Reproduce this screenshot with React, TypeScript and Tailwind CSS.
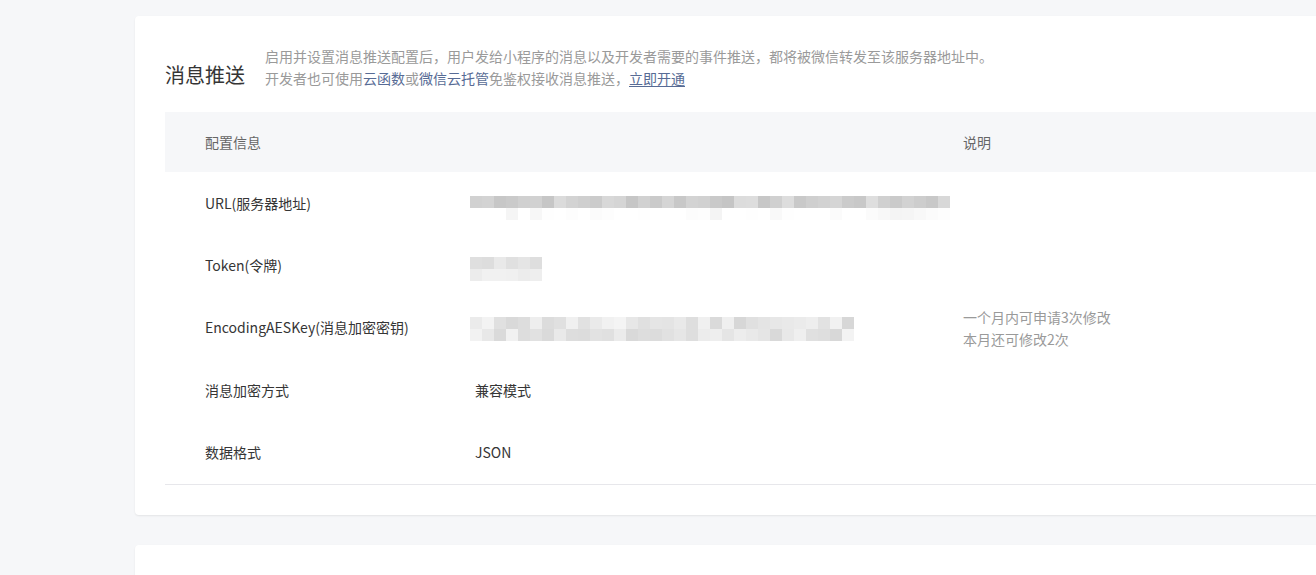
import React from "react";

// deterministic pseudo random so the mosaic looks the same every render
function seeded(seed: number) {
  let s = seed;
  return () => {
    s = (s * 9301 + 49297) % 233280;
    return s / 233280;
  };
}

function gray(v: number) {
  const h = Math.min(255, Math.round(v)).toString(16).padStart(2, "0");
  return `#${h}${h}${h}`;
}

type MosaicProps = {
  blocks: number;
  seed: number;
  top: [number, number];
  bottom: [number, number];
  bottomBias?: number;
  className?: string;
};

function Mosaic({ blocks, seed, top, bottom, bottomBias = 1, className }: MosaicProps) {
  const rnd = seeded(seed);
  const topRow = Array.from({ length: blocks }, () => gray(top[0] + (top[1] - top[0]) * rnd()));
  // bias pushes the lower row towards its light end
  const bottomRow = Array.from({ length: blocks }, () =>
    gray(bottom[1] - (bottom[1] - bottom[0]) * Math.pow(rnd(), bottomBias))
  );
  return (
    <div className={`flex flex-col ml-[-5px] ${className ?? ""}`}>
      {[topRow, bottomRow].map((row, r) => (
        <div key={r} className="flex">
          {row.map((c, i) => (
            <div key={i} className="w-[12px] h-[12px]" style={{ backgroundColor: c }} />
          ))}
        </div>
      ))}
    </div>
  );
}

const rows: { label: string; value: React.ReactNode; note?: React.ReactNode }[] = [
  {
    label: "URL(服务器地址)",
    value: (
      <Mosaic blocks={40} seed={7} top={[196, 222]} bottom={[242, 255]} bottomBias={4} className="mt-[10px]" />
    ),
  },
  {
    label: "Token(令牌)",
    value: <Mosaic blocks={6} seed={3} top={[218, 234]} bottom={[236, 244]} className="mt-[6px]" />,
  },
  {
    label: "EncodingAESKey(消息加密密钥)",
    value: <Mosaic blocks={32} seed={11} top={[214, 246]} bottom={[214, 244]} className="mt-[2px]" />,
    note: (
      <div className="leading-[22px]">
        <p>一个月内可申请3次修改</p>
        <p>本月还可修改2次</p>
      </div>
    ),
  },
  { label: "消息加密方式", value: <span>兼容模式</span> },
  { label: "数据格式", value: <span>JSON</span> },
];

export default function App() {
  return (
    <div
      className="w-[1316px] h-[575px] overflow-hidden bg-[#f6f7f9] pl-[135px] pt-[16px] text-[14px] text-[#353535]"
      style={{ fontFamily: '"Noto Sans CJK SC", "Noto Sans", sans-serif' }}
    >
      <div className="w-[1300px] bg-white rounded-[4px] shadow-[0_1px_2px_rgba(0,0,0,0.08)] pl-[30px] pt-[29px] pb-[30px]">
        {/* header */}
        <div className="flex items-end gap-[20px]">
          <h2 className="text-[20px] leading-[28px] text-[#353535] font-normal">消息推送</h2>
          <div className="text-[#9a9a9a] leading-[22px]">
            <p>启用并设置消息推送配置后，用户发给小程序的消息以及开发者需要的事件推送，都将被微信转发至该服务器地址中。</p>
            <p>
              开发者也可使用<span className="text-[#576b95]">云函数</span>或
              <span className="text-[#576b95]">微信云托管</span>免鉴权接收消息推送，
              <a className="text-[#576b95] underline underline-offset-2">立即开通</a>
            </p>
          </div>
        </div>

        {/* table */}
        <div className="mt-[23px] border-b border-[#e7e7eb]">
          <div className="flex h-[60px] items-center bg-[#f6f7f9] text-[#666]">
            <div className="w-[270px] pl-[40px]">配置信息</div>
            <div className="w-[488px]" />
            <div className="pl-[40px]">说明</div>
          </div>
          {rows.map((r) => (
            <div key={r.label} className="flex h-[62.4px] items-center">
              <div className="w-[270px] pl-[40px]">{r.label}</div>
              <div className="w-[488px] pl-[40px] flex items-center">{r.value}</div>
              <div className="pl-[40px] text-[#9a9a9a]">{r.note}</div>
            </div>
          ))}
        </div>
      </div>

      <div className="mt-[30px] w-[1300px] h-[60px] bg-white rounded-[4px] shadow-[0_1px_2px_rgba(0,0,0,0.08)]" />
    </div>
  );
}
